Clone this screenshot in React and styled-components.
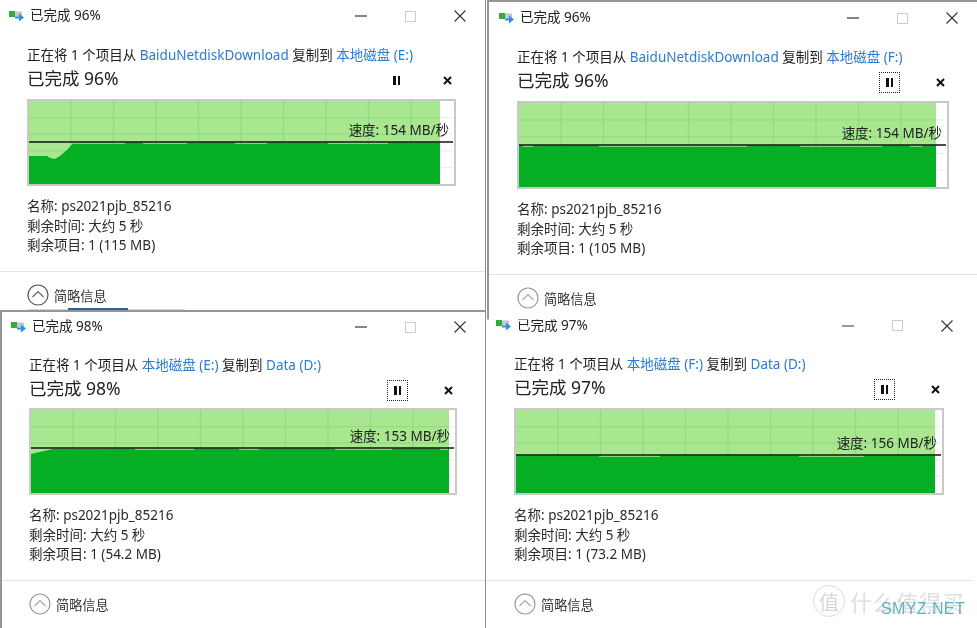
import React from 'react';
import styled, {createGlobalStyle} from 'styled-components';

const GlobalStyle = createGlobalStyle`
    html, body {
        margin: 0;
        background: #fff;
    }
    body {
        font-family: "Noto Sans", "Noto Sans CJK SC", sans-serif;
        color: #222;
    }
`;

const Desktop = styled.div`
    position: relative;
    width: 977px;
    height: 628px;
    overflow: hidden;
    background: #fff;
    filter: blur(0.3px);
`;

const Win = styled.section`
    position: absolute;
    left: ${props => props.$left}px;
    top: ${props => props.$top}px;
    width: ${props => props.$width}px;
    height: ${props => props.$height}px;
    box-sizing: border-box;
    background: #fff;
    overflow: hidden;
    border-left: ${props => props.$borderLeft ? '2px solid #969696' : 'none'};
    border-top: ${props => props.$borderTop ? '2px solid #969696' : 'none'};
    border-right: ${props => props.$borderRight ? '1px solid #8c8c8c' : 'none'};
    clip-path: ${props => props.$clipTop ? `inset(${props.$clipTop}px 0 0 0)` : 'none'};
`;

const TitleBar = styled.header`
    display: flex;
    align-items: center;
    height: ${props => props.$height}px;
    padding-left: ${props => props.$inset - 18}px;
    font-size: 13.5px;
    line-height: 1;
`;

const TitleText = styled.span`
    margin-left: 5px;
    flex: 1;
`;

const WinButton = styled.span`
    display: flex;
    align-items: center;
    justify-content: center;
    width: 49.5px;
    height: 100%;
`;

const Body = styled.div`
    box-sizing: border-box;
    padding-left: ${props => props.$inset}px;
    width: ${props => props.$inset + props.$graphWidth}px;
`;

const CopyLine = styled.div`
    margin-top: ${props => props.$gap}px;
    height: 20px;
    line-height: 20px;
    font-size: 13.5px;
    white-space: nowrap;
`;

const Place = styled.span`
    color: #2a7cd6;
`;

const HeadRow = styled.div`
    display: flex;
    align-items: center;
    height: 24px;
    margin-top: 1px;
`;

const Heading = styled.h1`
    flex: 1;
    margin: 0;
    font-size: 17.5px;
    font-weight: 400;
    line-height: 24px;
    white-space: nowrap;
`;

const PauseButton = styled.span`
    display: flex;
    align-items: center;
    justify-content: center;
    box-sizing: border-box;
    width: 21px;
    height: 21px;
    margin-top: 5px;
    border: 1px dotted ${props => props.$focused ? '#222' : 'transparent'};
`;

const PauseBar = styled.i`
    display: block;
    width: 2.5px;
    height: 9px;
    margin: 0 1px;
    background: #111;
`;

const StopButton = styled.span`
    display: flex;
    align-items: center;
    justify-content: center;
    width: 18px;
    height: 21px;
    margin-top: 5px;
    margin-left: 31px;
`;

const GraphBox = styled.div`
    position: relative;
    box-sizing: border-box;
    width: ${props => props.$width}px;
    height: ${props => props.$height}px;
    margin-top: ${props => props.$gap}px;
    border: 2px solid #c9c9c9;
    background: #fff;
`;

const GraphSvg = styled.svg`
    display: block;
    width: 100%;
    height: 100%;
`;

const Speed = styled.span`
    position: absolute;
    right: 5px;
    top: ${props => props.$line - 22}px;
    font-size: 13.5px;
    line-height: 20px;
    white-space: nowrap;
`;

const Details = styled.div`
    margin-top: 11px;
`;

const DetailRow = styled.div`
    height: 19.5px;
    line-height: 19.5px;
    font-size: 13.5px;
    color: #2a2a2a;
    white-space: nowrap;
`;

const Divider = styled.hr`
    margin: 15px 0 0;
    border: none;
    border-top: 1px solid #e2e2e2;
`;

const Footer = styled.footer`
    display: flex;
    align-items: center;
    gap: 5px;
    height: 47px;
    padding-left: ${props => props.$inset}px;
    font-size: 13.2px;
    color: #333;
`;

// edge of a hidden tab that still shows under the window lying on top
const TabEdge = styled.div`
    position: absolute;
    left: 28px;
    top: 308.500px;
    width: 157px;
    height: 1px;
    background: #d8d8d8;

    &::after {
        content: '';
        position: absolute;
        left: 40px;
        top: -0.5px;
        width: 60px;
        height: 2px;
        background: #2a6496;
    }
`;

const Watermark = styled.div`
    position: absolute;
    left: 813px;
    top: 584px;
    display: flex;
    align-items: center;
    gap: 5px;
    height: 34px;
`;

const WatermarkSeal = styled.span`
    display: flex;
    align-items: center;
    justify-content: center;
    width: 30px;
    height: 30px;
    border: 1px solid #ddd;
    border-radius: 50%;
    font-size: 20px;
    color: #d6d6d6;
`;

const WatermarkName = styled.span`
    font-size: 22px;
    letter-spacing: 1px;
    color: #dedede;
    white-space: nowrap;
`;

const SiteMark = styled.span`
    position: absolute;
    left: 881px;
    top: 598px;
    font-family: "Liberation Sans", sans-serif;
    font-size: 16px;
    line-height: 22px;
    letter-spacing: 0.4px;
    color: #5fb2c6;
`;

const CopyIcon = () => (
    <svg width="16" height="11" viewBox="0 0 16 11">
        <rect x="0" y="0" width="6" height="6" fill="#2fae3c" />
        <rect x="6" y="0.5" width="7" height="5" fill="#c4c8cc" />
        <path d="M6 5.5h4V2.5l5 4-5 4V7.5H6z" fill="#2f8fe0" />
    </svg>
);

const MinIcon = () => (
    <svg width="12" height="12" viewBox="0 0 12 12">
        <path d="M0 6h12" stroke="#333" strokeWidth="1.2" />
    </svg>
);

const MaxIcon = () => (
    <svg width="11" height="11" viewBox="0 0 11 11">
        <rect x="0.5" y="0.5" width="10" height="10" fill="none" stroke="#ccc" />
    </svg>
);

const CloseIcon = () => (
    <svg width="12" height="12" viewBox="0 0 12 12">
        <path d="M0.5 0.5l11 11M11.5 0.5l-11 11" stroke="#333" strokeWidth="1.1" />
    </svg>
);

const StopIcon = () => (
    <svg width="9" height="9" viewBox="0 0 9 9">
        <path d="M1 1l7 7M8 1l-7 7" stroke="#111" strokeWidth="2" />
    </svg>
);

const ChevronCircle = ({dark}) => (
    <svg width="22" height="22" viewBox="0 0 22 22">
        <circle cx="11" cy="11" r="10" fill="none" stroke={dark ? '#555' : '#999'} strokeWidth="1.2" />
        <path d="M5.5 13l5.5-5.5 5.500 5.500" fill="none" stroke={dark ? '#666' : '#aaa'} strokeWidth="1.2" />
    </svg>
);

// area under the speed line, a notch is a stretch where it sits a little lower
const areaPath = (g, plotH) => {
    const top = g.line + 0.5;
    const low = top + 1.2;
    const pts = [...(g.start || [])];
    let x = pts.length ? pts[pts.length - 1][0] : 0;
    if (!pts.length) pts.push([0, top]);
    (g.notches || []).forEach(([a, b]) => {
        pts.push([Math.max(a, x), top], [Math.max(a, x), low], [b, low], [b, top]);
        x = b;
    });
    pts.push([g.fill, top]);
    const d = pts.map(([px, py]) => `${px} ${py}`).join('L');
    return `M0 ${plotH}L${d}L${g.fill} ${plotH}Z`;
};

const Graph = ({g, width, height, gap, speed}) => {
    const plotW = width - 4;
    const plotH = height - 4;
    const cols = [];
    for (let i = 1; i < 10; i++) cols.push(i * 42.5 - 0.5);
    const rows = [1, 2, 3, 4].map(i => i * plotH / 5);
    return (
        <GraphBox $width={width} $height={height} $gap={gap}>
            <GraphSvg viewBox={`0 0 ${plotW} ${plotH}`}>
                <rect x="0" y="0" width={g.fill} height={plotH} fill="#a8e690" />
                {cols.map(x => <path key={x} d={`M${x} 0V${plotH}`} stroke="#8fdc7c" strokeWidth="1.2" />)}
                {rows.map(y => <path key={y} d={`M0 ${y}H${plotW - 1}`} stroke="#8fdc7c" strokeWidth="1.2" opacity={0.85} />)}
                <rect x={g.fill} y="0" width={plotW - g.fill} height={plotH} fill="#fff" opacity="0.72" />
                <path d={areaPath(g, plotH)} fill="#06ae24" />
                <path d={`M0 ${g.line}H${plotW - 1}`} stroke="#111" strokeWidth="1.4" />
            </GraphSvg>
            <Speed $line={g.line}>速度: {speed} MB/秒</Speed>
        </GraphBox>
    );
};

const windows = [
    {
        key: 'e', left: 0, top: 0, width: 486, height: 312, inset: 27, titleH: 32, copyGap: 13, gap: 9,
        percent: 96, from: 'BaiduNetdiskDownload', to: '本地磁盘 (E:)', speed: 154, left_: '115 MB',
        graphW: 429, graphH: 87, focused: false, dark: true, borderRight: true, tabEdge: true,
        graph: {
            fill: 411, line: 41,
            start: [[0, 55], [18, 55], [21, 57], [26, 58], [31, 55], [39, 48], [44, 42]],
            notches: [[44, 96], [114, 158], [206, 238], [299, 359]],
        },
    },
    {
        key: 'f', left: 487, top: 0, width: 490, height: 320, inset: 28, titleH: 34, copyGap: 13, gap: 9,
        percent: 96, from: 'BaiduNetdiskDownload', to: '本地磁盘 (F:)', speed: 154, left_: '105 MB',
        graphW: 432, graphH: 88, focused: true, dark: false, borderLeft: true, borderTop: true,
        graph: {
            fill: 417, line: 42,
            notches: [[4, 14], [80, 228], [281, 363], [391, 403]],
        },
    },
    {
        key: 'ed', left: 0, top: 310, width: 486, height: 318, inset: 27, titleH: 32, copyGap: 13, gap: 8,
        percent: 98, from: '本地磁盘 (E:)', to: 'Data (D:)', speed: 153, left_: '54.2 MB',
        graphW: 428, graphH: 87, focused: true, dark: false, borderLeft: true, borderTop: true, borderRight: true,
        graph: {
            fill: 418, line: 38,
            start: [[0, 44], [22, 39]],
            notches: [[104, 163], [208, 228], [304, 361], [409, 417]],
        },
    },
    {
        key: 'fd', left: 487, top: 309, width: 485, height: 319, inset: 27, titleH: 33, copyGap: 12, gap: 9, clipTop: 10.5,
        percent: 97, from: '本地磁盘 (F:)', to: 'Data (D:)', speed: 156, left_: '73.2 MB',
        graphW: 430, graphH: 87, focused: true, dark: false,
        graph: {
            fill: 419, line: 45,
            notches: [[83, 144], [283, 348]],
        },
    },
];

const CopyWindow = ({w}) => (
    <Win
        $left={w.left} $top={w.top} $width={w.width} $height={w.height}
        $borderLeft={w.borderLeft} $borderTop={w.borderTop} $borderRight={w.borderRight} $clipTop={w.clipTop}
    >
        <TitleBar $height={w.titleH - (w.borderTop ? 2 : 0)} $inset={w.inset}>
            <CopyIcon />
            <TitleText>已完成 {w.percent}%</TitleText>
            <WinButton><MinIcon /></WinButton>
            <WinButton><MaxIcon /></WinButton>
            <WinButton><CloseIcon /></WinButton>
        </TitleBar>
        <Body $inset={w.inset} $graphWidth={w.graphW}>
            <CopyLine $gap={w.copyGap}>正在将 1 个项目从 <Place>{w.from}</Place> 复制到 <Place>{w.to}</Place></CopyLine>
            <HeadRow>
                <Heading>已完成 {w.percent}%</Heading>
                <PauseButton $focused={w.focused}><PauseBar /><PauseBar /></PauseButton>
                <StopButton><StopIcon /></StopButton>
            </HeadRow>
            <Graph g={w.graph} width={w.graphW} height={w.graphH} gap={w.gap} speed={w.speed} />
            <Details>
                <DetailRow>名称: ps2021pjb_85216</DetailRow>
                <DetailRow>剩余时间: 大约 5 秒</DetailRow>
                <DetailRow>剩余项目: 1 ({w.left_})</DetailRow>
            </Details>
        </Body>
        <Divider />
        <Footer $inset={w.inset}>
            <ChevronCircle dark={w.dark} />
            简略信息
        </Footer>
        {w.tabEdge && <TabEdge />}
    </Win>
);

export default () => (
    <>
        <GlobalStyle />
        <Desktop>
            {windows.map(w => <CopyWindow key={w.key} w={w} />)}
            <Watermark>
                <WatermarkSeal>值</WatermarkSeal>
                <WatermarkName>什么值得买</WatermarkName>
            </Watermark>
            <SiteMark>SMYZ.NET</SiteMark>
        </Desktop>
    </>
);
